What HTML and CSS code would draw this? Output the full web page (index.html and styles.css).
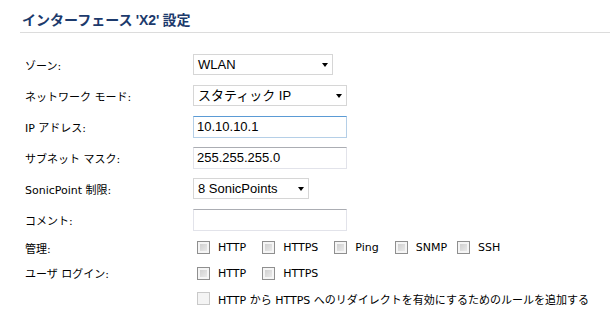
FILE: index.html
```html
<!DOCTYPE html>
<html lang="ja">

<head>
    <meta charset="UTF-8">
    <title>インターフェース設定</title>
    <link rel="stylesheet" href="styles.css">
</head>

<body>
    <div class="header">
        <h1>インターフェース <span class="ifname">'X2'</span> 設定</h1>
    </div>

    <div class="form">
        <div class="row">
            <label>ゾーン:</label>
            <div class="select w140"><span>WLAN</span></div>
        </div>
        <div class="row">
            <label>ネットワーク モード:</label>
            <div class="select w154"><span>スタティック IP</span></div>
        </div>
        <div class="row">
            <label>IP アドレス:</label>
            <input class="text w154 active" type="text" value="10.10.10.1">
        </div>
        <div class="row">
            <label>サブネット マスク:</label>
            <input class="text w154" type="text" value="255.255.255.0">
        </div>
        <div class="row">
            <label>SonicPoint 制限:</label>
            <div class="select w116"><span>8 SonicPoints</span></div>
        </div>
        <div class="row">
            <label>コメント:</label>
            <input class="text w154" type="text" value="">
        </div>

        <div class="row check-row">
            <label>管理:</label>
            <div class="checks">
                <span class="check"><input type="checkbox"> HTTP</span>
                <span class="check"><input type="checkbox"> HTTPS</span>
                <span class="check"><input type="checkbox"> Ping</span>
                <span class="check snmp"><input type="checkbox"> SNMP</span>
                <span class="check"><input type="checkbox"> SSH</span>
            </div>
        </div>
        <div class="row check-row">
            <label>ユーザ ログイン:</label>
            <div class="checks">
                <span class="check"><input type="checkbox"> HTTP</span>
                <span class="check"><input type="checkbox"> HTTPS</span>
            </div>
        </div>
        <div class="row check-row">
            <label></label>
            <div class="checks">
                <span class="check"><input type="checkbox" disabled> HTTP から HTTPS へのリダイレクトを有効にするためのルールを追加する</span>
            </div>
        </div>
    </div>
</body>

</html>
```

FILE: styles.css
```css
body {
    margin: 0;
    background: #ffffff;
    color: #000000;
    font-family: "DejaVu Sans", "Noto Sans CJK JP", sans-serif;
    font-size: 11px;
}

.header {
    margin-left: 20px;
    padding: 11px 0 3px 2px;
    border-bottom: 1px solid #dcdcdc;
}

h1 {
    margin: 0;
    font-family: "Noto Sans CJK JP", sans-serif;
    font-size: 14px;
    line-height: 17px;
    font-weight: bold;
    color: #1c3a6c;
}

.ifname {
    font-family: "Liberation Sans", sans-serif;
}

.form {
    padding: 16px 0 0 25px;
}

.row {
    display: grid;
    grid-template-columns: 168px auto;
    align-items: center;
    height: 31px;
}

.row label {
    white-space: nowrap;
}

.check-row {
    height: 25.5px;
}

.w116 { width: 116px; }
.w140 { width: 140px; }
.w154 { width: 154px; }

.select {
    position: relative;
    box-sizing: border-box;
    height: 21px;
    border: 1px solid #d6d6d6;
    background: #ffffff;
    font-family: "Liberation Sans", "Noto Sans CJK JP", sans-serif;
    font-size: 13px;
    line-height: 19px;
    padding-left: 4px;
    color: #000000;
}

.select::after {
    content: '';
    position: absolute;
    right: 4px;
    top: 8px;
    border-left: 3.5px solid transparent;
    border-right: 3.5px solid transparent;
    border-top: 4px solid #000000;
}

.text {
    box-sizing: border-box;
    height: 22px;
    margin: 0;
    padding: 0 0 0 3px;
    border: 1px solid #e2e3ea;
    border-top-color: #abadb3;
    font-family: "Liberation Sans", sans-serif;
    font-size: 13px;
    color: #000000;
    outline: none;
}

.text.active {
    border-color: #b5cfe7;
    border-top-color: #5b9bd5;
}

.checks {
    display: flex;
    align-items: center;
    padding-left: 4px;
}

.check {
    display: flex;
    align-items: center;
    white-space: nowrap;
    margin-right: 16px;
}

.check.snmp {
    margin-right: 10px;
}

.check input {
    appearance: none;
    -webkit-appearance: none;
    box-sizing: border-box;
    width: 13px;
    height: 13px;
    margin: 0 8px 0 0;
    border: 1px solid #8f8f8f;
    background: linear-gradient(135deg, #c9c9c9, #f0f0f0);
    box-shadow: inset 0 0 0 2px #f5f5f5;
}

.check input:disabled {
    border-color: #c9c9c9;
    background: #f4f4f4;
    box-shadow: none;
}
```
